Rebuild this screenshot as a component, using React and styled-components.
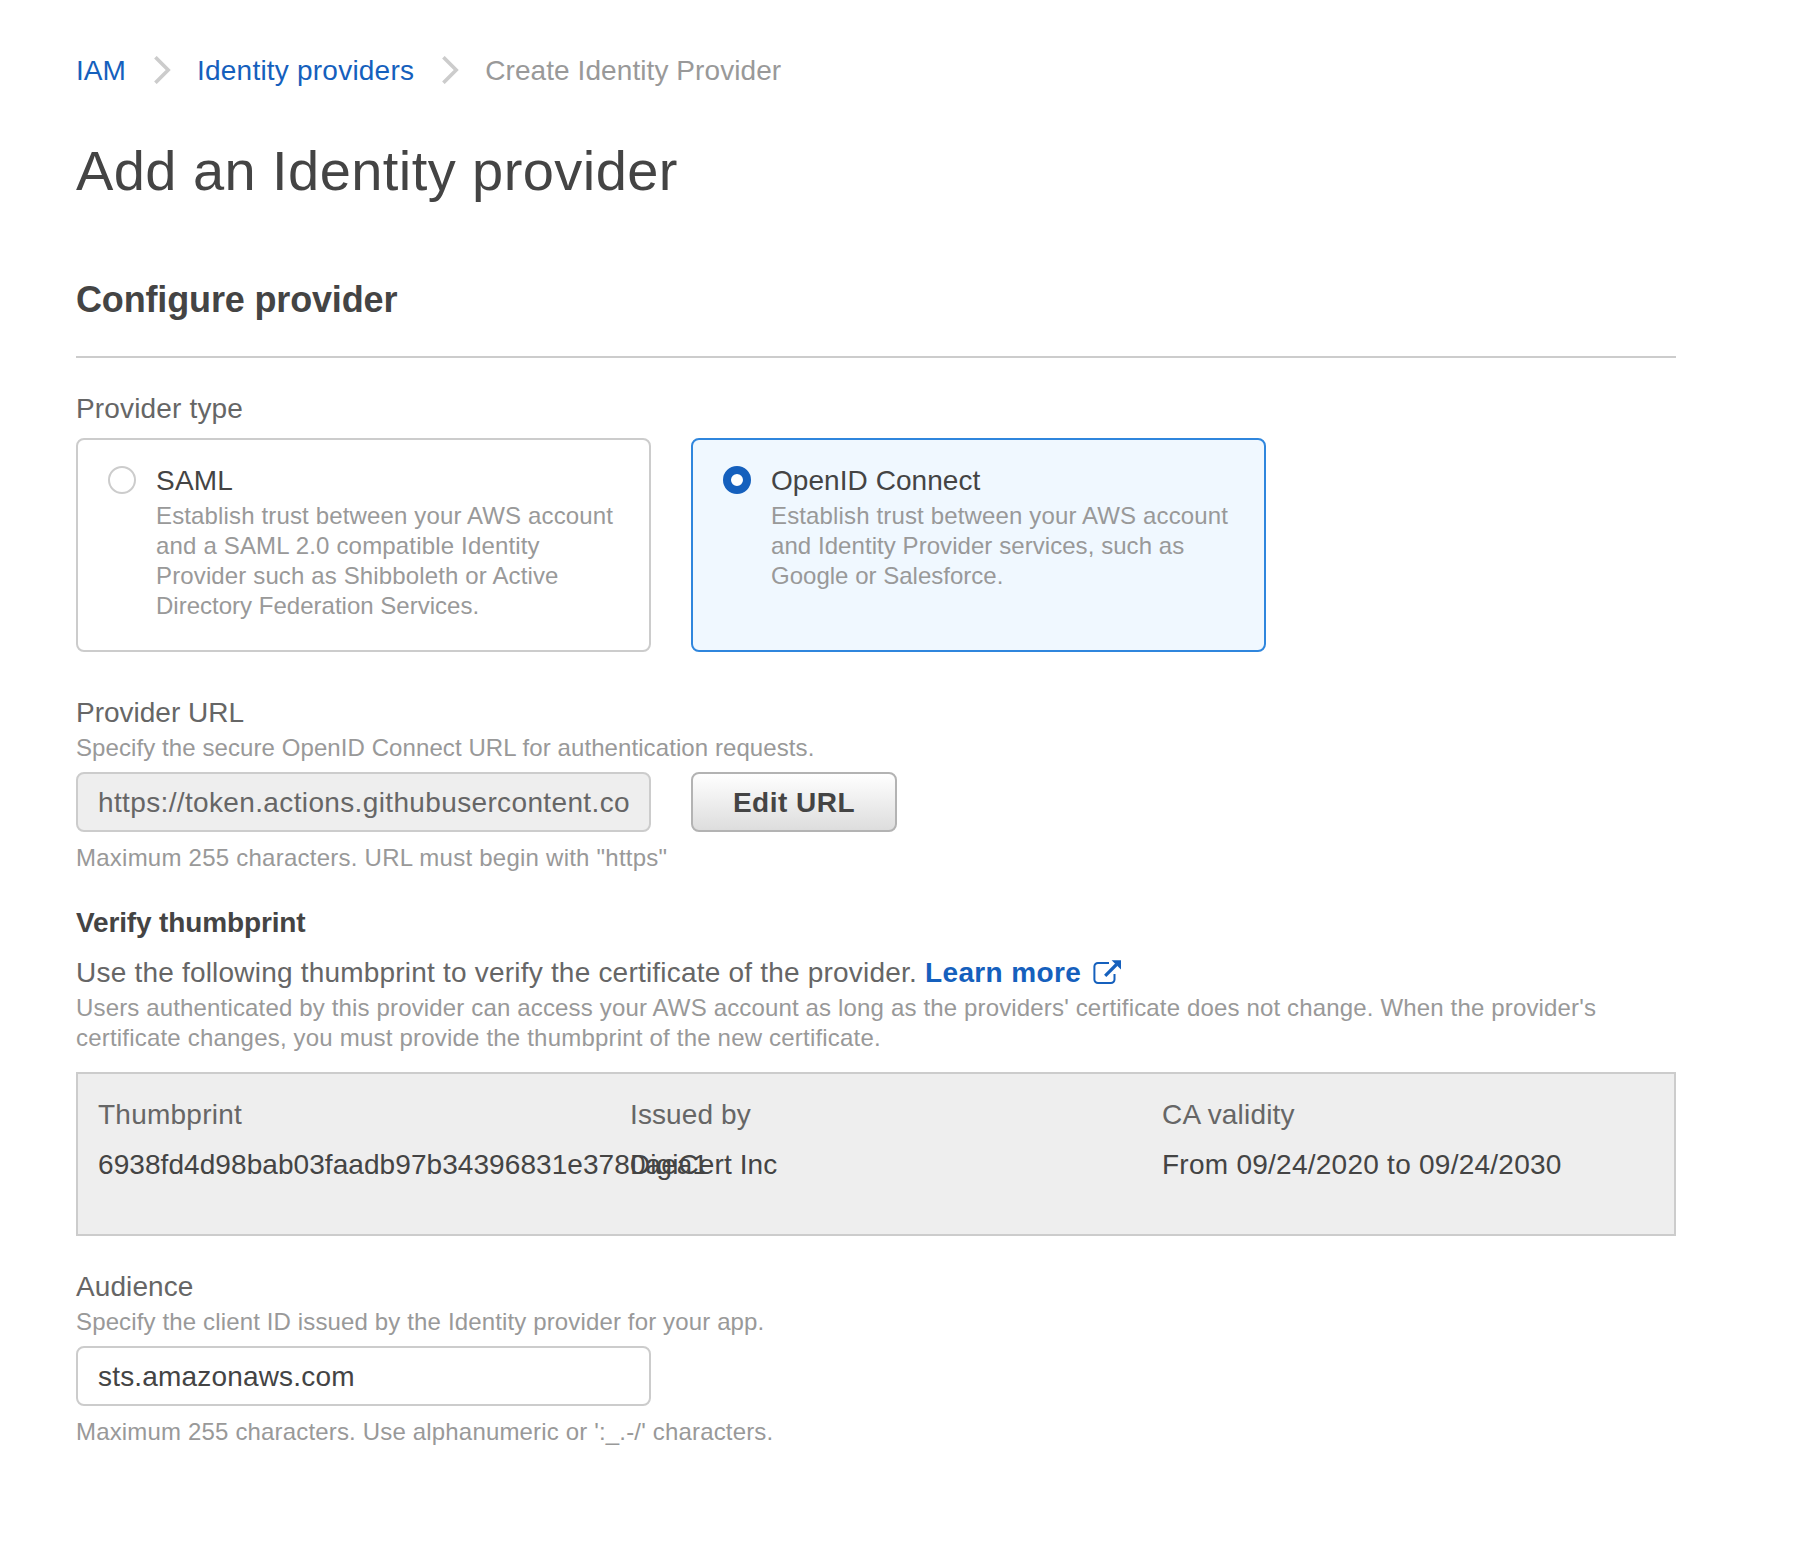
import React, { useState } from "react";
import styled, { createGlobalStyle, css } from "styled-components";

const color = {
  heading: "#444444",
  label: "#666666",
  hint: "#999999",
  link: "#1560bd",
  line: "#cccccc",
  panel: "#eeeeee",
  selectedLine: "#2f86dd",
  selectedFill: "#f0f8ff",
};

const GlobalStyle = createGlobalStyle`
  *, *::before, *::after { box-sizing: border-box; }
  body {
    margin: 0;
    background: #ffffff;
    color: ${color.heading};
    font-family: "Liberation Sans", Arial, Helvetica, sans-serif;
    font-size: 28px;
    line-height: 36px;
  }
`;

const tracked = css`
  letter-spacing: ${(p) => p.$track ?? 0}px;
  white-space: nowrap;
`;

const Page = styled.main`
  width: 1676px;
  padding: 53px 0 96px 76px;
`;

const Breadcrumb = styled.nav`
  display: flex;
  align-items: center;
  height: 36px;
`;

const CrumbLink = styled.a`
  ${tracked}
  color: ${color.link};
  text-decoration: none;
`;

const CurrentCrumb = styled.span`
  ${tracked}
  color: ${color.hint};
`;

const Separator = styled.svg`
  flex: none;
  width: 18px;
  height: 28px;
  margin: 0 26px 2px 27px;
`;

const PageTitle = styled.h1`
  ${tracked}
  margin: 50px 0 0;
  font-size: 56px;
  font-weight: 400;
  line-height: 64px;
`;

const SectionTitle = styled.h2`
  ${tracked}
  margin: 0;
  padding: 75px 0 34px;
  border-bottom: 2px solid ${color.line};
  font-size: 36px;
  font-weight: 700;
  line-height: 44px;
`;

const Field = styled.section`
  margin-top: ${(p) => p.$top}px;
`;

const Label = styled.div`
  ${tracked}
  color: ${color.label};
`;

const Hint = styled.p`
  margin: ${(p) => p.$top ?? 2}px 0 0;
  color: ${color.hint};
  font-size: 24px;
  line-height: 30px;
`;

const Line = styled.span`
  ${tracked}
  display: block;
`;

const Cards = styled.div`
  display: grid;
  grid-template-columns: 575px 575px;
  column-gap: 40px;
  margin-top: 11px;
`;

const Card = styled.label`
  display: flex;
  height: 214px;
  padding: 23px 0 0 30px;
  border: 2px solid ${(p) => (p.$selected ? color.selectedLine : color.line)};
  border-radius: 8px;
  background: ${(p) => (p.$selected ? color.selectedFill : "#ffffff")};
`;

const Radio = styled.input.attrs({ type: "radio", name: "provider-type" })`
  appearance: none;
  flex: none;
  width: 28px;
  height: 28px;
  margin: 3px 20px 0 0;
  border: 2px solid ${color.line};
  border-radius: 50%;
  background: #ffffff;

  &:checked {
    border: 8px solid ${color.link};
  }
`;

const CardTitle = styled.div`
  ${tracked}
  color: ${color.heading};
`;

const InputRow = styled.div`
  display: flex;
  gap: 40px;
  margin-top: 9px;
`;

const TextInput = styled.input`
  ${tracked}
  width: 575px;
  height: 60px;
  padding: 2px 20px 0;
  border: 2px solid ${color.line};
  border-radius: 8px;
  outline: none;
  background: #ffffff;
  color: ${color.heading};
  font: inherit;
  letter-spacing: ${(p) => p.$track}px;

  &:read-only {
    background: ${color.panel};
    color: ${color.label};
  }
`;

const Button = styled.button`
  width: 206px;
  height: 60px;
  padding: 2px 0 0;
  border: 2px solid #b3b3b3;
  border-radius: 8px;
  background: linear-gradient(#ffffff, #dddddd);
  color: ${color.heading};
  font: inherit;
  font-weight: 700;
  letter-spacing: 0.5px;
`;

const SubTitle = styled.h3`
  ${tracked}
  margin: 32px 0 14px;
  font-size: 28px;
  font-weight: 700;
  line-height: 36px;
`;

const Sentence = styled.div`
  display: flex;
  gap: 8px;
`;

const LearnMore = styled.a`
  ${tracked}
  display: flex;
  gap: 12px;
  color: ${color.link};
  font-weight: 700;
  text-decoration: none;
`;

const ExternalIcon = styled.svg`
  width: 28px;
  height: 25px;
  margin-top: 5px;
`;

const Certificate = styled.dl`
  display: grid;
  grid-template-columns: repeat(3, 532px);
  height: 164px;
  margin: 19px 0 0;
  padding: 23px 0 0 20px;
  border: 2px solid ${color.line};
  background: ${color.panel};
`;

const CertificateColumn = styled.div`
  min-width: 0;
`;

const Term = styled.dt`
  ${tracked}
  color: ${color.label};
`;

const Value = styled.dd`
  ${tracked}
  margin: 14px 0 0;
  color: ${color.heading};
`;

const providerTypes = [
  {
    id: "saml",
    title: "SAML",
    track: 0.2,
    lines: [
      ["Establish trust between your AWS account", 0.145],
      ["and a SAML 2.0 compatible Identity", 0.17],
      ["Provider such as Shibboleth or Active", 0.135],
      ["Directory Federation Services.", 0.01],
    ],
  },
  {
    id: "oidc",
    title: "OpenID Connect",
    track: 0.06,
    lines: [
      ["Establish trust between your AWS account", 0.145],
      ["and Identity Provider services, such as", 0.062],
      ["Google or Salesforce.", 0.01],
    ],
  },
];

const certificate = [
  { term: "Thumbprint", termTrack: 0.241, value: "6938fd4d98bab03faadb97b34396831e3780aea1", track: 0.07 },
  { term: "Issued by", termTrack: 0.1, value: "DigiCert Inc", track: 0.08 },
  { term: "CA validity", termTrack: 0.18, value: "From 09/24/2020 to 09/24/2030", track: 0.255 },
];

function Chevron() {
  return (
    <Separator viewBox="0 0 18 28" aria-hidden="true">
      <path d="M2.4 1.2 L15.2 14 L2.4 26.8" fill="none" stroke={color.line} strokeWidth="3.6" />
    </Separator>
  );
}

function External() {
  return (
    <ExternalIcon viewBox="0 0 28 25" aria-hidden="true">
      <path
        d="M16 3H5A3.6 3.6 0 0 0 1.4 6.6V19.4A3.6 3.6 0 0 0 5 23H17.9A3.6 3.6 0 0 0 21.5 19.4V14"
        fill="none"
        stroke={color.link}
        strokeWidth="2"
      />
      <path d="M12.2 15.8L23.5 4.5" fill="none" stroke={color.link} strokeWidth="3.2" />
      <path d="M18.6 0.2H28V9.6Z" fill={color.link} />
    </ExternalIcon>
  );
}

export default function App() {
  const [type, setType] = useState("oidc");
  const [audience, setAudience] = useState("sts.amazonaws.com");

  return (
    <>
      <GlobalStyle />
      <Page>
        <Breadcrumb>
          <CrumbLink $track={0.07}>IAM</CrumbLink>
          <Chevron />
          <CrumbLink $track={0.22}>Identity providers</CrumbLink>
          <Chevron />
          <CurrentCrumb $track={0.08}>Create Identity Provider</CurrentCrumb>
        </Breadcrumb>

        <PageTitle $track={0.434}>Add an Identity provider</PageTitle>
        <SectionTitle $track={-0.153}>Configure provider</SectionTitle>

        <Field $top={33}>
          <Label $track={0.159}>Provider type</Label>
          <Cards>
            {providerTypes.map((item) => (
              <Card key={item.id} $selected={type === item.id}>
                <Radio checked={type === item.id} onChange={() => setType(item.id)} />
                <div>
                  <CardTitle $track={item.track}>{item.title}</CardTitle>
                  <Hint>
                    {item.lines.map(([text, track]) => (
                      <Line key={text} $track={track}>{text}</Line>
                    ))}
                  </Hint>
                </div>
              </Card>
            ))}
          </Cards>
        </Field>

        <Field $top={43}>
          <Label>Provider URL</Label>
          <Hint>
            <Line $track={0.084}>Specify the secure OpenID Connect URL for authentication requests.</Line>
          </Hint>
          <InputRow>
            <TextInput readOnly $track={0.361} defaultValue="https://token.actions.githubusercontent.com" />
            <Button type="button">Edit URL</Button>
          </InputRow>
          <Hint $top={11}>
            <Line $track={0.242}>Maximum 255 characters. URL must begin with "https"</Line>
          </Hint>
        </Field>

        <SubTitle $track={-0.136}>Verify thumbprint</SubTitle>
        <Sentence>
          <Label $track={0.205}>Use the following thumbprint to verify the certificate of the provider.</Label>
          <LearnMore $track={0.37}>
            Learn more
            <External />
          </LearnMore>
        </Sentence>
        <Hint>
          <Line $track={0.156}>
            Users authenticated by this provider can access your AWS account as long as the providers' certificate does
            not change. When the provider's
          </Line>
          <Line $track={0.199}>certificate changes, you must provide the thumbprint of the new certificate.</Line>
        </Hint>
        <Certificate>
          {certificate.map((item) => (
            <CertificateColumn key={item.term}>
              <Term $track={item.termTrack}>{item.term}</Term>
              <Value $track={item.track}>{item.value}</Value>
            </CertificateColumn>
          ))}
        </Certificate>

        <Field $top={33}>
          <Label $track={0.088}>Audience</Label>
          <Hint>
            <Line $track={0.14}>Specify the client ID issued by the Identity provider for your app.</Line>
          </Hint>
          <InputRow>
            <TextInput $track={0.18} value={audience} onChange={(e) => setAudience(e.target.value)} />
          </InputRow>
          <Hint $top={11}>
            <Line $track={0.168}>Maximum 255 characters. Use alphanumeric or ':_.-/' characters.</Line>
          </Hint>
        </Field>
      </Page>
    </>
  );
}
